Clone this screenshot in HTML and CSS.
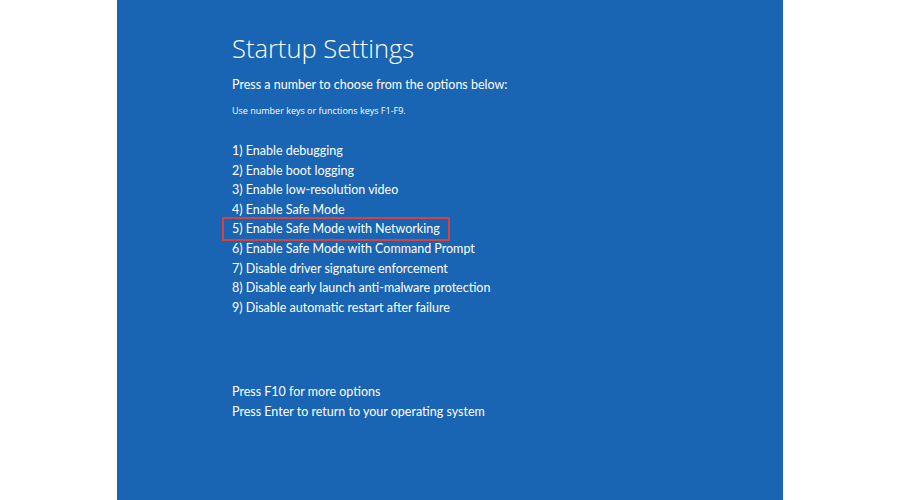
FILE: index.html
```html
<!DOCTYPE html>
<html>
<head>
<meta charset="utf-8">
<link rel="stylesheet" href="styles.css">
</head>
<body>
<div class="page">
  <main class="screen">
    <h1 class="title">Startup Settings</h1>
    <p class="lead">Press a number to choose from the options below:</p>
    <p class="hint">Use number keys or functions keys F1-F9.</p>
    <ul class="options">
      <li>1) Enable debugging</li>
      <li>2) Enable boot logging</li>
      <li>3) Enable low-resolution video</li>
      <li>4) Enable Safe Mode</li>
      <li class="selected"><span class="box">5) Enable Safe Mode with Networking</span></li>
      <li>6) Enable Safe Mode with Command Prompt</li>
      <li>7) Disable driver signature enforcement</li>
      <li>8) Disable early launch anti-malware protection</li>
      <li>9) Disable automatic restart after failure</li>
    </ul>
    <ul class="footer">
      <li>Press F10 for more options</li>
      <li>Press Enter to return to your operating system</li>
    </ul>
  </main>
</div>
</body>
</html>
```
FILE: styles.css
```css
html, body {
  margin: 0;
  padding: 0;
  background: #ffffff;
}
.page {
  width: 900px;
  height: 500px;
  display: flex;
  justify-content: flex-start;
}
.screen {
  margin-left: 117px;
  width: 666px;
  height: 500px;
  background: #1a64b4;
  box-sizing: border-box;
  padding: 29px 0 0 115px;
  color: #ffffff;
  font-family: "Lato", "Open Sans", sans-serif;
}
.title {
  margin: 0;
  font-family: "Open Sans", "Noto Sans", sans-serif;
  font-size: 25.5px;
  font-weight: 300;
  line-height: 38px;
}
.lead {
  margin: 9px 0 0 0;
  font-size: 12.5px;
  line-height: 18px;
}
.hint {
  margin: 10px 0 0 0;
  font-family: "Open Sans", "Noto Sans", sans-serif;
  font-size: 9px;
  line-height: 14px;
}
.options, .footer {
  list-style: none;
  margin: 0;
  padding: 0;
  font-size: 12.5px;
  line-height: 19.5px;
}
.options {
  margin-top: 23px;
}
.footer {
  margin-top: 65px;
}
.selected .box {
  display: inline-block;
  margin: -2px 0 -2px -10px;
  padding: 0 8px;
  border: 2px solid #d8423c;
  line-height: 20px;
}
```
